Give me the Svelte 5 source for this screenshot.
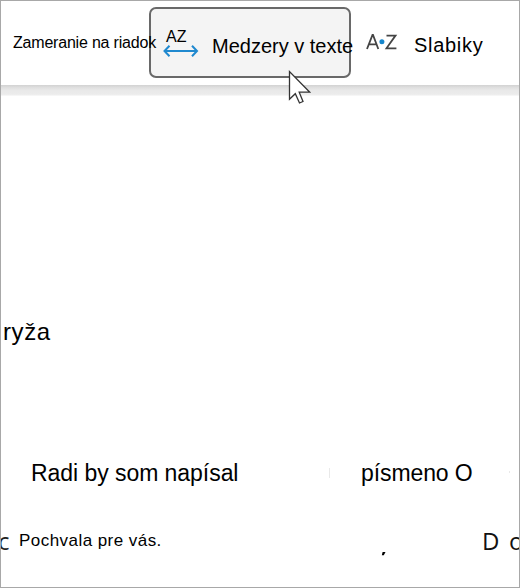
<script lang="ts">
	let { active = 'spacing' }: { active?: string } = $props();
</script>

<div class="reader">
	<div class="toolbar">
		<div class="tool focus-tool">Zameranie na riadok</div>
		<div class="tool spacing-tool" class:active={active === 'spacing'}>
			<div class="spacing-icon">
				<span>AZ</span>
				<svg width="36" height="14" viewBox="0 0 36 14">
					<path d="M1.5 7H34M6.5 1.8L1.5 7L6.5 12.2M29 1.8L34 7L29 12.2" />
				</svg>
			</div>
			<span class="spacing-label">Medzery v texte</span>
		</div>
		<div class="tool syllable-tool">
			<svg width="32" height="16" viewBox="0 0 32 16">
				<path d="M1 15L6.5 1H7L12.3 15M3 10.3H10.5M20.5 1.6H29.5L20.5 14.3H30.4" />
				<circle cx="15.9" cy="7.7" r="2.5" />
			</svg>
			<span>Slabiky</span>
		</div>
	</div>
	<div class="band"></div>

	<div class="page">
		<div class="line first">ryža</div>
		<div class="line second">
			<span>Radi by som napísal</span>
			<i class="speck"></i>
			<span class="letter">písmeno O</span>
			<i class="speck small"></i>
		</div>
		<div class="line third">
			<span class="cut">c</span>
			<span class="praise">Pochvala pre vás.</span>
			<svg class="comma" width="6" height="5" viewBox="0 0 6 5">
				<path d="M1.6 0H4.5L2.8 3.2H.8Z" />
			</svg>
			<span class="spaced">D</span>
			<span class="edge">o</span>
		</div>
	</div>

	<svg class="cursor" width="24" height="36" viewBox="0 0 24 36">
		<path d="M2.5 2.5V30.3L8.3 24.7L12.5 34L16 32.5L12.2 23.2H22.8Z" />
	</svg>
</div>

<style>
	:global(body) {
		margin: 0;
		background: #fff;
	}

	.reader {
		position: relative;
		box-sizing: border-box;
		width: 520px;
		height: 588px;
		overflow: hidden;
		border: 1px solid #a8a8a8;
		background: #fff;
		color: #000;
		font-family: "Liberation Sans", Arial, sans-serif;
	}

	.toolbar {
		display: flex;
		height: 84px;
		white-space: nowrap;
	}

	.tool {
		box-sizing: border-box;
		flex: none;
		display: flex;
	}

	.focus-tool {
		z-index: 1;
		width: 148px;
		padding-left: 12px;
		font-size: 16px;
		letter-spacing: -0.2px;
		line-height: 83px;
	}

	.spacing-tool {
		width: 202px;
		height: 71px;
		margin-top: 6px;
		padding-left: 12px;
		border: 2px solid transparent;
		border-radius: 7px;
	}

	.spacing-tool.active {
		border-color: #696969;
		background: #f4f4f4;
	}

	.spacing-icon {
		display: flex;
		flex-direction: column;
		width: 36px;
		padding-top: 18px;
		font-size: 16px;
		line-height: 20px;
	}

	.spacing-icon span {
		padding-left: 3px;
	}

	.spacing-icon svg {
		margin-top: -3px;
		fill: none;
		stroke: #2089cf;
		stroke-width: 2;
	}

	.spacing-label {
		margin-left: 13px;
		font-size: 20px;
		line-height: 74px;
	}

	.syllable-tool {
		padding-left: 15px;
		font-size: 20px;
		letter-spacing: 0.7px;
		line-height: 88px;
	}

	.syllable-tool svg {
		margin: 33px 16px 0 0;
		fill: none;
		stroke: #444;
		stroke-width: 1.8;
	}

	.syllable-tool circle {
		fill: #1686cc;
		stroke: none;
	}

	.band {
		height: 11px;
		background: linear-gradient(#d2d2d2, #e0e0e0 25%, #e9e9e9 50%, #ececec 85%, #fafafa);
	}

	.page {
		padding-top: 216px;
	}

	.line {
		display: flex;
		height: 40px;
		line-height: 40px;
		white-space: nowrap;
	}

	.line > * {
		flex: none;
	}

	.first {
		padding-left: 2px;
		font-size: 24px;
		letter-spacing: 0.6px;
	}

	.second {
		margin-top: 101px;
		padding-left: 30px;
		font-size: 23px;
	}

	.second span:first-child {
		width: 298px;
		letter-spacing: -0.05px;
	}

	.speck {
		width: 1px;
		height: 10px;
		margin-top: 15px;
		background: #e9e9e9;
	}

	.speck.small {
		height: 2px;
		margin-top: 18px;
	}

	.letter {
		width: 179px;
		padding-left: 31px;
		box-sizing: border-box;
		letter-spacing: -0.1px;
	}

	.third {
		margin-top: 28px;
		font-size: 17px;
	}

	.cut {
		width: 18px;
		margin-left: -3px;
		font: 24px/40px "Open Sans", sans-serif;
		color: #222;
	}

	.praise {
		width: 365px;
		padding-left: 3px;
		box-sizing: border-box;
		letter-spacing: 0.45px;
	}

	.comma {
		margin-top: 31px;
	}

	.spaced,
	.edge {
		font: 24px/40px "Open Sans", sans-serif;
		color: #111;
	}

	.spaced {
		width: 27px;
		margin-left: 95px;
	}

	.cursor {
		position: absolute;
		left: 286px;
		top: 68px;
		fill: #fff;
		stroke: #333;
		stroke-width: 1.3;
	}
</style>
